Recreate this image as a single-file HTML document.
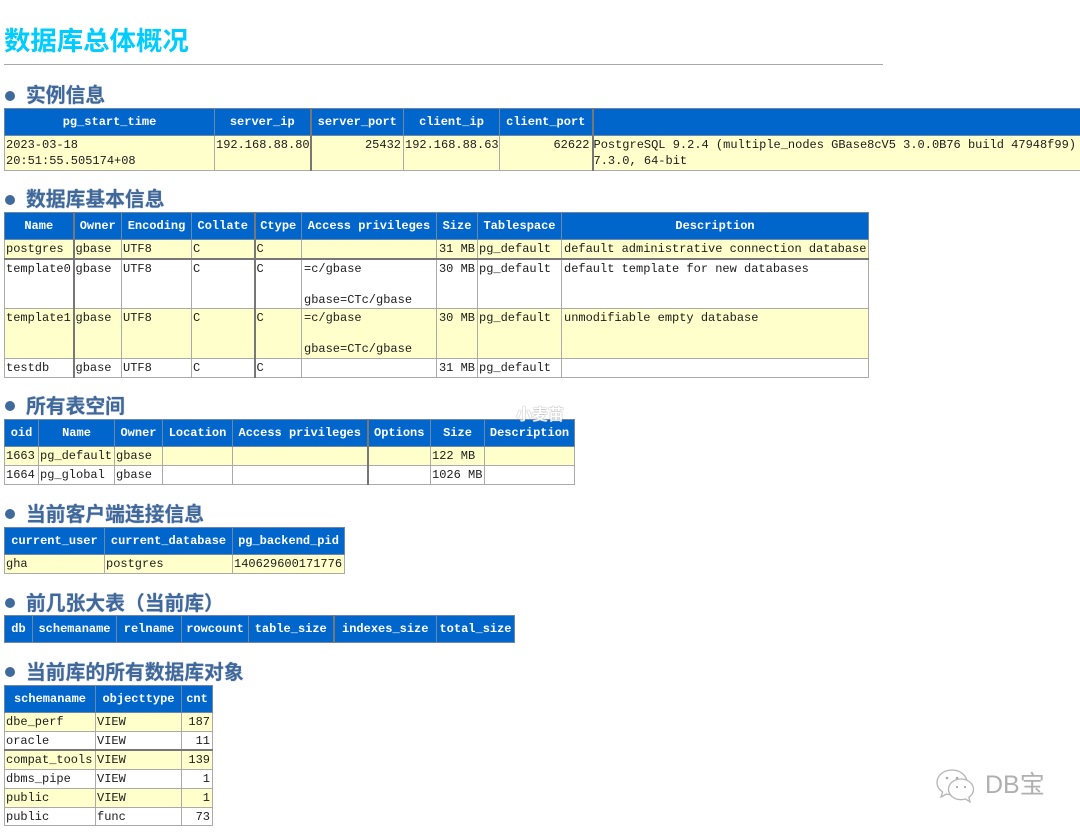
<!DOCTYPE html>
<html lang="zh"><head><meta charset="utf-8"><title>数据库总体概况</title>
<style>
html,body{margin:0;padding:0;background:#fff;width:1080px;height:832px;overflow:hidden}
body{position:relative;font-family:"Liberation Mono",monospace;font-size:12px;color:#1c1c1c}
h1,h2{position:absolute;margin:0;font-family:"Liberation Sans","Noto Sans CJK SC",sans-serif;font-weight:700;white-space:nowrap}
h1{left:4px;top:22px;font-size:26.4px;line-height:38px;color:#0cf}
h2{left:26px;font-size:19.8px;line-height:28px;color:#41689a;text-shadow:0 0 1px #7f9abb}
.b{position:absolute;left:5px;width:10px;height:10px;border-radius:50%;background:#3e6a9c}
.hr{position:absolute;left:4px;top:64px;width:879px;height:1px;background:#a8a8a8}
table{position:absolute;border-collapse:collapse;table-layout:fixed;border:1px solid #a0a0a0;font-size:12px}
th,td{box-sizing:border-box;border:1px solid #aaa;padding:0 2px 0 1px;overflow:hidden;white-space:nowrap;line-height:15.5px}
th{background:#0066cc;color:#fff;font-weight:700;text-align:center;vertical-align:top;height:27px;padding:6px 0 0;border-color:#6d87a5}
td{vertical-align:top;padding-top:2px;height:19px}
tr.o td{background:#ffffcc}
tr.n td{height:18px}
td.p{padding-left:2px}
.r{text-align:right}
.dk{border-left:2px solid #777}
tr.t td{border-top:2px solid #777}
.wm{position:absolute;left:516px;top:406px;font:700 16px/20px "Liberation Sans","Noto Sans CJK SC",sans-serif;color:#fff;text-shadow:0 0 1px #888,0 0 1px #888;opacity:.85;white-space:nowrap}
.db{position:absolute;left:985px;top:770px;font:400 25px/30px "Liberation Sans","Noto Sans CJK SC",sans-serif;color:#b0b0b0;white-space:nowrap}
svg{position:absolute}
</style></head><body>
<h1>数据库总体概况</h1>
<div class="hr"></div>

<div class="b" style="top:91px"></div><h2 style="top:82px">实例信息</h2>
<table style="left:4px;top:108px;width:1300px">
<colgroup><col style="width:210px"><col style="width:96px"><col style="width:93px"><col style="width:96px"><col style="width:93px"><col style="width:712px"></colgroup>
<tr><th>pg_start_time</th><th>server_ip</th><th class="dk">server_port</th><th>client_ip</th><th>client_port</th><th class="dk"></th></tr>
<tr class="o"><td style="height:35px">2023-03-18<br>20:51:55.505174+08</td><td>192.168.88.80</td><td class="r dk">25432</td><td>192.168.88.63</td><td class="r">62622</td><td class="dk" style="padding-left:0">PostgreSQL 9.2.4 (multiple_nodes GBase8cV5 3.0.0B76 build 47948f99)<br>7.3.0, 64-bit</td></tr>
</table>

<div class="b" style="top:195px"></div><h2 style="top:186px">数据库基本信息</h2>
<table style="left:4px;top:212px;width:864px">
<colgroup><col style="width:69px"><col style="width:48px"><col style="width:70px"><col style="width:63px"><col style="width:47px"><col style="width:135px"><col style="width:41px"><col style="width:84px"><col style="width:307px"></colgroup>
<tr><th>Name</th><th class="dk">Owner</th><th>Encoding</th><th>Collate</th><th class="dk">Ctype</th><th>Access privileges</th><th>Size</th><th>Tablespace</th><th>Description</th></tr>
<tr class="o"><td>postgres</td><td class="dk">gbase</td><td>UTF8</td><td>C</td><td class="dk">C</td><td class="p"></td><td class="r">31 MB</td><td>pg_default</td><td class="p">default administrative connection database</td></tr>
<tr class="t"><td style="height:50px">template0</td><td class="dk">gbase</td><td>UTF8</td><td>C</td><td class="dk">C</td><td class="p">=c/gbase<br><br>gbase=CTc/gbase</td><td class="r">30 MB</td><td>pg_default</td><td class="p">default template for new databases</td></tr>
<tr class="o"><td style="height:50px">template1</td><td class="dk">gbase</td><td>UTF8</td><td>C</td><td class="dk">C</td><td class="p">=c/gbase<br><br>gbase=CTc/gbase</td><td class="r">30 MB</td><td>pg_default</td><td class="p">unmodifiable empty database</td></tr>
<tr class="n"><td>testdb</td><td class="dk">gbase</td><td>UTF8</td><td>C</td><td class="dk">C</td><td class="p"></td><td class="r">31 MB</td><td>pg_default</td><td class="p"></td></tr>
</table>

<div class="b" style="top:401px"></div><h2 style="top:393px">所有表空间</h2>
<table style="left:4px;top:419px;width:570px">
<colgroup><col style="width:34px"><col style="width:76px"><col style="width:48px"><col style="width:70px"><col style="width:135px"><col style="width:63px"><col style="width:54px"><col style="width:90px"></colgroup>
<tr><th>oid</th><th>Name</th><th>Owner</th><th>Location</th><th>Access privileges</th><th class="dk">Options</th><th>Size</th><th>Description</th></tr>
<tr class="o"><td>1663</td><td>pg_default</td><td>gbase</td><td></td><td></td><td class="dk"></td><td>122 MB</td><td></td></tr>
<tr><td>1664</td><td>pg_global</td><td>gbase</td><td></td><td></td><td class="dk"></td><td>1026 MB</td><td></td></tr>
</table>

<div class="b" style="top:509px"></div><h2 style="top:501px">当前客户端连接信息</h2>
<table style="left:4px;top:527px;width:340px">
<colgroup><col style="width:100px"><col style="width:128px"><col style="width:112px"></colgroup>
<tr><th>current_user</th><th>current_database</th><th>pg_backend_pid</th></tr>
<tr class="o"><td>gha</td><td>postgres</td><td>140629600171776</td></tr>
</table>

<div class="b" style="top:598px"></div><h2 style="top:590px">前几张大表（当前库）</h2>
<table style="left:4px;top:615px;width:510px">
<colgroup><col style="width:28px"><col style="width:84px"><col style="width:65px"><col style="width:67px"><col style="width:85px"><col style="width:103px"><col style="width:78px"></colgroup>
<tr><th>db</th><th>schemaname</th><th>relname</th><th>rowcount</th><th>table_size</th><th class="dk">indexes_size</th><th>total_size</th></tr>
</table>

<div class="b" style="top:667px"></div><h2 style="top:659px">当前库的所有数据库对象</h2>
<table style="left:4px;top:685px;width:208px">
<colgroup><col style="width:91px"><col style="width:86px"><col style="width:31px"></colgroup>
<tr><th>schemaname</th><th>objecttype</th><th>cnt</th></tr>
<tr class="o n"><td>dbe_perf</td><td>VIEW</td><td class="r">187</td></tr>
<tr><td>oracle</td><td>VIEW</td><td class="r">11</td></tr>
<tr class="o n t"><td>compat_tools</td><td>VIEW</td><td class="r">139</td></tr>
<tr><td>dbms_pipe</td><td>VIEW</td><td class="r">1</td></tr>
<tr class="o"><td>public</td><td>VIEW</td><td class="r">1</td></tr>
<tr class="n"><td>public</td><td>func</td><td class="r">73</td></tr>
</table>

<div class="wm">小麦苗</div>
<svg style="left:934px;top:767px" width="46" height="38" viewBox="0 0 46 38" fill="#fff" stroke="#b5b5b5" stroke-width="1.3">
<path d="M18 3C9.500 3 3 8.500 3 15.500c0 4 2.200 7.300 5.600 9.500L7 30l5.500-3c1.800.5 3.600.8 5.500.8 8.500 0 15-5.500 15-12.300S26.500 3 18 3z"/>
<path d="M27 12c-7 0-12.500 4.700-12.500 10.300S20 32.700 27 32.700c1.500 0 3-.2 4.400-.7l4.600 2.800-1.200-4.500c2.900-1.900 4.700-4.700 4.700-7.900C39.500 16.700 34 12 27 12z"/>
<circle cx="13" cy="11" r="1.300" fill="#aaa" stroke="none"/><circle cx="23" cy="11" r="1.300" fill="#aaa" stroke="none"/>
<circle cx="23" cy="20" r="1.100" fill="#aaa" stroke="none"/><circle cx="31" cy="20" r="1.100" fill="#aaa" stroke="none"/>
</svg>
<div class="db">DB宝</div>
</body></html>
